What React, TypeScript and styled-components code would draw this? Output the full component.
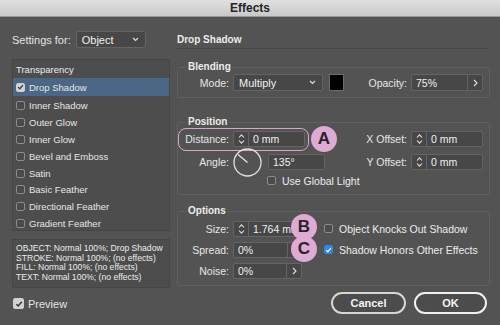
import React from 'react';
import styled, { createGlobalStyle } from 'styled-components';

const GlobalStyle = createGlobalStyle`
  html, body {
    margin: 0;
    padding: 0;
    background: #535353;
  }
  body {
    font-family: "Liberation Sans", Arial, sans-serif;
    color: #e4e4e4;
  }
  * {
    box-sizing: border-box;
  }
`;

const Window = styled.div`
  width: 500px;
  height: 325px;
  background: #535353;
  display: flex;
  flex-direction: column;
  overflow: hidden;
`;

const TitleBar = styled.div`
  height: 17px;
  flex: none;
  display: flex;
  align-items: center;
  justify-content: center;
  background: linear-gradient(#e0e0e0, #c8c8c8);
  border-bottom: 1px solid #9a9a9a;
  color: #262626;
  font-size: 12px;
  font-weight: bold;
`;

const Body = styled.div`
  display: grid;
  grid-template-columns: 158px 313px;
  column-gap: 7px;
  padding: 14px 0 0 12px;
`;

const LeftCol = styled.div`
  display: flex;
  flex-direction: column;
`;

const RightCol = styled.div`
  display: flex;
  flex-direction: column;
`;

const SettingsRow = styled.div`
  height: 17px;
  display: flex;
  align-items: center;
  gap: 5px;
  font-size: 11px;
`;

const Select = styled.div<{ $width: number; $height?: number }>`
  width: ${({ $width }) => $width}px;
  height: ${({ $height }) => $height || 17}px;
  display: flex;
  align-items: center;
  justify-content: space-between;
  padding: 0 6px 0 5px;
  background: #474747;
  border: 1px solid #646464;
  border-radius: 2px;
  font-size: 11px;
  color: #f0f0f0;
`;

const ListPanel = styled.div`
  margin-top: 11px;
  height: 172px;
  background: #4d4d4d;
  border: 1px solid #464646;
  overflow: hidden;
`;

const ListHeader = styled.div`
  height: 18px;
  display: flex;
  align-items: center;
  padding-left: 3px;
  font-size: 9.5px;
  color: #ececec;
`;

const ListItem = styled.div<{ $selected?: boolean }>`
  height: ${({ $selected }) => ($selected ? 18 : 16.8)}px;
  margin-bottom: ${({ $selected }) => ($selected ? 1.5 : 0)}px;
  display: flex;
  align-items: center;
  gap: 4px;
  padding-left: 3px;
  font-size: 9.5px;
  background: ${({ $selected }) => ($selected ? '#4b6787' : 'transparent')};
  color: #e6e6e6;
`;

const Box = styled.span<{ $size?: number; $tone?: 'off' | 'gray' | 'blue'; $gap?: number }>`
  flex: none;
  width: ${({ $size }) => $size || 9}px;
  height: ${({ $size }) => $size || 9}px;
  margin-left: ${({ $gap }) => $gap || 0}px;
  display: inline-flex;
  align-items: center;
  justify-content: center;
  border-radius: 2px;
  border: 1px solid ${({ $tone }) => ($tone === 'blue' ? '#2f86e8' : $tone === 'gray' ? '#cfcfcf' : '#8c8c8c')};
  background: ${({ $tone }) => ($tone === 'blue' ? '#2f86e8' : $tone === 'gray' ? '#d2d2d2' : '#4a4a4a')};
`;

const InfoBox = styled.div`
  margin-top: 8px;
  height: 49px;
  background: #4d4d4d;
  border: 1px solid #464646;
  padding: 4px 3px;
  font-size: 8.6px;
  line-height: 9.7px;
  color: #ececec;
  white-space: nowrap;
`;

const PreviewRow = styled.div`
  margin-top: 10px;
  height: 11px;
  display: flex;
  align-items: center;
  gap: 4px;
  padding-left: 1px;
  font-size: 11px;
`;

const Header = styled.div`
  height: 18px;
  margin-right: 2px;
  display: flex;
  align-items: center;
  border-bottom: 1px solid #484848;
  font-size: 10px;
  font-weight: bold;
  color: #ececec;
`;

const Group = styled.fieldset<{ $top: number; $bottom: number }>`
  margin: ${({ $top }) => $top}px 0 0 0;
  padding: 0 6px ${({ $bottom }) => $bottom}px 0;
  border: 1px solid #606060;
  border-radius: 3px;
  min-width: 0;
`;

const Legend = styled.legend`
  margin-left: 8px;
  padding: 0 2px;
  font-size: 10px;
  line-height: 14px;
  font-weight: bold;
  color: #ececec;
`;

const Row = styled.div<{ $h: number; $pad?: number }>`
  position: relative;
  height: ${({ $h }) => $h}px;
  display: flex;
  align-items: center;
  padding-left: ${({ $pad }) => $pad || 0}px;
  font-size: 10.5px;
`;

const FieldLabel = styled.span<{ $w: number }>`
  width: ${({ $w }) => $w}px;
  margin-right: 4px;
  text-align: right;
  white-space: nowrap;
  color: #e6e6e6;
`;

const RightGroup = styled.div`
  margin-left: auto;
  display: flex;
  align-items: center;
`;

const Field = styled.div<{ $w: number; $h?: number }>`
  width: ${({ $w }) => $w}px;
  height: ${({ $h }) => $h || 16}px;
  display: flex;
  align-items: stretch;
  background: #474747;
  border: 1px solid #646464;
  border-radius: 2px;
  font-size: 10.5px;
  color: #f0f0f0;
  overflow: hidden;
`;

const FieldText = styled.span`
  flex: 1;
  display: flex;
  align-items: center;
  padding-left: 4px;
  white-space: nowrap;
`;

const Segment = styled.span<{ $side: 'left' | 'right' }>`
  flex: none;
  width: 15px;
  display: flex;
  align-items: center;
  justify-content: center;
  border-${({ $side }) => ($side === 'left' ? 'right' : 'left')}: 1px solid #646464;
`;

const Swatch = styled.div`
  width: 15px;
  height: 17px;
  margin-left: 6px;
  background: #000;
  border: 1px solid #6c6c6c;
`;

const Dial = styled.svg`
  flex: none;
  margin-right: 6px;
`;

const CheckText = styled.span`
  margin-left: 6px;
  white-space: nowrap;
  color: #ececec;
`;

const Ring = styled.div`
  position: absolute;
  left: 0;
  top: -1px;
  width: 131px;
  height: 23px;
  border: 1.5px solid #d9a6cb;
  border-radius: 8px;
  pointer-events: none;
`;

const Badge = styled.div<{ $left: number; $top: number }>`
  position: absolute;
  left: ${({ $left }) => $left}px;
  top: ${({ $top }) => $top}px;
  width: 26px;
  height: 26px;
  border-radius: 50%;
  background: #dfaad3;
  display: flex;
  align-items: center;
  justify-content: center;
  font-size: 17px;
  font-weight: bold;
  color: #262626;
  z-index: 2;
`;

const ButtonRow = styled.div`
  margin-top: 6px;
  padding-right: 3px;
  display: flex;
  justify-content: flex-end;
  gap: 8px;
`;

const Button = styled.button<{ $w: number; $primary?: boolean }>`
  width: ${({ $w }) => $w}px;
  height: 22px;
  padding: 0;
  border-radius: 11px;
  border: ${({ $primary }) => ($primary ? '2.5px solid #f0f0f0' : '2px solid #d6d6d6')};
  background: #4c4c4c;
  color: #f4f4f4;
  font-family: inherit;
  font-size: 11px;
  font-weight: bold;
`;

const Check = ({ color }: { color: string }) => (
  <svg width="8" height="8" viewBox="0 0 8 8">
    <path d="M1.3 4.2 L3.2 6 L6.8 1.8" fill="none" stroke={color} strokeWidth="1.4" />
  </svg>
);

const Chevron = () => (
  <svg width="7" height="5" viewBox="0 0 7 5">
    <path d="M1 1 L3.5 3.5 L6 1" fill="none" stroke="#e0e0e0" strokeWidth="1.1" />
  </svg>
);

const ArrowRight = () => (
  <svg width="5" height="8" viewBox="0 0 5 8">
    <path d="M1 1 L4 4 L1 7" fill="none" stroke="#e0e0e0" strokeWidth="1.1" />
  </svg>
);

const UpDown = () => (
  <svg width="7" height="12" viewBox="0 0 7 12">
    <path d="M1 4.5 L3.5 1.8 L6 4.5 M1 7.5 L3.5 10.2 L6 7.5" fill="none" stroke="#e0e0e0" strokeWidth="1.1" />
  </svg>
);

const SpinField = ({ w, value }: { w: number; value: string }) => (
  <Field $w={w}>
    <Segment $side="left"><UpDown /></Segment>
    <FieldText>{value}</FieldText>
  </Field>
);

const StepField = ({ w, value, h }: { w: number; value: string; h?: number }) => (
  <Field $w={w} $h={h}>
    <FieldText>{value}</FieldText>
    <Segment $side="right"><ArrowRight /></Segment>
  </Field>
);

const effects = [
  'Inner Shadow',
  'Outer Glow',
  'Inner Glow',
  'Bevel and Emboss',
  'Satin',
  'Basic Feather',
  'Directional Feather',
  'Gradient Feather',
];

const App: React.FC = () => {
  return (
    <Window>
      <GlobalStyle />
      <TitleBar>Effects</TitleBar>
      <Body>
        <LeftCol>
          <SettingsRow>
            <span>Settings for:</span>
            <Select $width={70}>
              <span>Object</span>
              <Chevron />
            </Select>
          </SettingsRow>
          <ListPanel>
            <ListHeader>Transparency</ListHeader>
            <ListItem $selected>
              <Box $tone="gray"><Check color="#333" /></Box>
              Drop Shadow
            </ListItem>
            {effects.map((name) => (
              <ListItem key={name}>
                <Box />
                {name}
              </ListItem>
            ))}
          </ListPanel>
          <InfoBox>
            OBJECT: Normal 100%; Drop Shadow<br />
            STROKE: Normal 100%; (no effects)<br />
            FILL: Normal 100%; (no effects)<br />
            TEXT: Normal 100%; (no effects)
          </InfoBox>
          <PreviewRow>
            <Box $size={11} $tone="gray"><Check color="#333" /></Box>
            Preview
          </PreviewRow>
        </LeftCol>

        <RightCol>
          <Header>Drop Shadow</Header>

          <Group $top={11} $bottom={6}>
            <Legend>Blending</Legend>
            <Row $h={17}>
              <FieldLabel $w={51}>Mode:</FieldLabel>
              <Select $width={90}>
                <span>Multiply</span>
                <Chevron />
              </Select>
              <Swatch />
              <RightGroup>
                <FieldLabel $w={50}>Opacity:</FieldLabel>
                <StepField w={72} h={17} value="75%" />
              </RightGroup>
            </Row>
          </Group>

          <Group $top={17} $bottom={8}>
            <Legend>Position</Legend>
            <Row $h={20}>
              <Ring />
              <FieldLabel $w={51}>Distance:</FieldLabel>
              <SpinField w={72} value="0 mm" />
              <Badge $left={133} $top={-3}>A</Badge>
              <RightGroup>
                <FieldLabel $w={50}>X Offset:</FieldLabel>
                <SpinField w={72} value="0 mm" />
              </RightGroup>
            </Row>
            <Row $h={26}>
              <FieldLabel $w={51}>Angle:</FieldLabel>
              <Dial width="29" height="29" viewBox="0 0 29 29">
                <circle cx="14.5" cy="14.5" r="13.5" fill="none" stroke="#e2e2e2" strokeWidth="1.3" />
                <line x1="14.5" y1="14.5" x2="5" y2="6.5" stroke="#e2e2e2" strokeWidth="1.3" />
              </Dial>
              <Field $w={57}>
                <FieldText>135°</FieldText>
              </Field>
              <RightGroup>
                <FieldLabel $w={50}>Y Offset:</FieldLabel>
                <SpinField w={72} value="0 mm" />
              </RightGroup>
            </Row>
            <Row $h={11} $pad={89}>
              <Box />
              <CheckText>Use Global Light</CheckText>
            </Row>
          </Group>

          <Group $top={9} $bottom={4}>
            <Legend>Options</Legend>
            <Row $h={21}>
              <FieldLabel $w={51}>Size:</FieldLabel>
              <SpinField w={72} value="1.764 mm" />
              <Badge $left={113} $top={-4}>B</Badge>
              <Box $gap={19} />
              <CheckText>Object Knocks Out Shadow</CheckText>
            </Row>
            <Row $h={21}>
              <FieldLabel $w={51}>Spread:</FieldLabel>
              <StepField w={70} value="0%" />
              <Badge $left={113} $top={-3}>C</Badge>
              <Box $tone="blue" $gap={21}><Check color="#fff" /></Box>
              <CheckText>Shadow Honors Other Effects</CheckText>
            </Row>
            <Row $h={21}>
              <FieldLabel $w={51}>Noise:</FieldLabel>
              <StepField w={69} value="0%" />
            </Row>
          </Group>

          <ButtonRow>
            <Button $w={75}>Cancel</Button>
            <Button $w={73} $primary>OK</Button>
          </ButtonRow>
        </RightCol>
      </Body>
    </Window>
  );
};

export default App;
